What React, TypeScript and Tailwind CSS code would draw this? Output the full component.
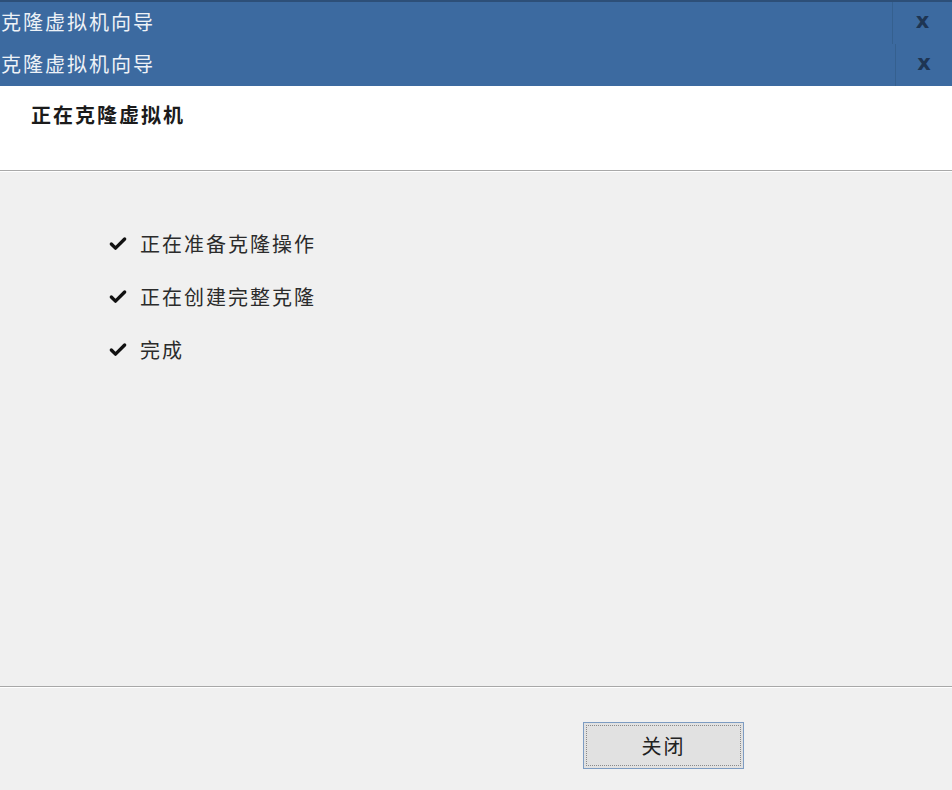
import { Check } from "lucide-react";

const font = { fontFamily: '"Microsoft YaHei", "Noto Sans CJK SC", sans-serif' };

function TitleBar({ closeX }: { closeX: string }) {
  return (
    <div className="flex h-[42px] items-center">
      <div className="mb-[3px] flex-1 pl-[1px] text-[20px] tracking-[2px] text-[#eef2f7]">克隆虚拟机向导</div>
      <div className={`flex h-full ${closeX} items-center justify-center border-l border-[#35608f]`}>
        <span
          className="mb-[3px] text-[21px] font-bold text-[#1e3553]"
          style={{ fontFamily: '"DejaVu Sans", sans-serif' }}
        >
          x
        </span>
      </div>
    </div>
  );
}

const steps = ["正在准备克隆操作", "正在创建完整克隆", "完成"];

export default function App() {
  return (
    <div className="flex h-[790px] w-[952px] flex-col bg-[#f0f0f0]" style={font}>
      {/* stacked title bars */}
      <div className="border-t-2 border-[#2d4f78] bg-[#3c6aa0]">
        <TitleBar closeX="w-[60px]" />
        <TitleBar closeX="w-[57px]" />
      </div>

      {/* header */}
      <div className="h-[85px] border-b border-[#a9a9a9] bg-white pl-[31px] pt-[14px]">
        <span className="text-[20px] font-bold tracking-[2px] text-[#1b1b1b]">正在克隆虚拟机</span>
      </div>
      <div className="h-px bg-white" />

      {/* progress list */}
      <div className="flex flex-1 flex-col gap-[31px] pl-[108px] pt-[61px]">
        {steps.map((s) => (
          <div key={s} className="flex h-[22px] items-center gap-[12px]">
            <Check className="h-[20px] w-[20px] text-[#111]" strokeWidth={4} />
            <span className="text-[20px] tracking-[2px] text-[#2b2b2b]">{s}</span>
          </div>
        ))}
      </div>

      {/* footer */}
      <div className="h-px bg-[#a8a8a8]" />
      <div className="h-px bg-white" />
      <div className="flex h-[102px] pl-[583px] pt-[34px]">
        <button className="h-[47px] w-[161px] border border-[#7d9cc2] bg-[#e1e1e1] p-[2px]">
          <div className="flex h-full w-full items-center justify-center border border-dotted border-[#8a8a8a]">
            <span className="text-[20px] tracking-[2px] text-[#222]">关闭</span>
          </div>
        </button>
      </div>
    </div>
  );
}
